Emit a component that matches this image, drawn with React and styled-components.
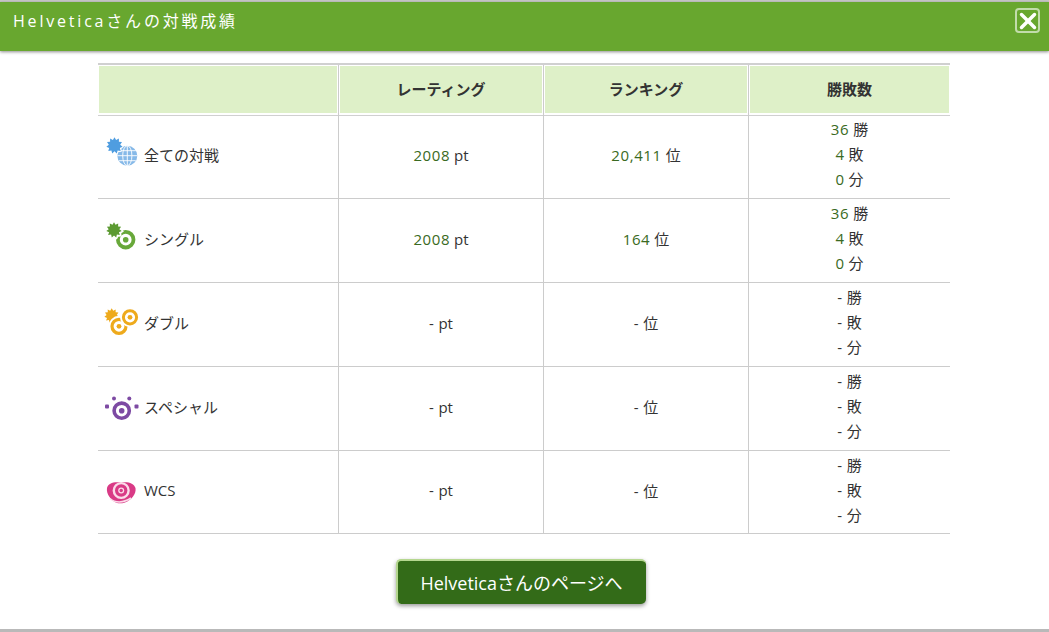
import React from 'react';
import styled, { createGlobalStyle } from 'styled-components';
import { X } from 'lucide-react';

const GlobalStyle = createGlobalStyle`
  html, body {
    margin: 0;
    padding: 0;
    background: #fff;
    overflow: hidden;
  }
  body {
    font-family: "Open Sans", "Noto Sans CJK JP", sans-serif;
    color: #333;
  }
`;

const Page = styled.div`
  width: 1049px;
  height: 632px;
  box-sizing: border-box;
  border-top: 2px solid #c8c8c8;
  border-bottom: 3px solid #b9b9b9;
  display: flex;
  flex-direction: column;
`;

const TitleBar = styled.header`
  height: 49px;
  flex: none;
  background: #68a72f;
  box-shadow: 0 1px 3px rgba(0, 0, 0, 0.45);
  display: flex;
  justify-content: space-between;
  align-items: flex-start;
  padding: 0 9px 0 13px;
`;

const Title = styled.h1`
  margin: 8px 0 0;
  font-size: 16px;
  line-height: 22px;
  font-weight: 400;
  letter-spacing: 2.8px;
  color: #fff;
`;

const CloseButton = styled.button`
  width: 25px;
  height: 25px;
  margin-top: 6px;
  padding: 0;
  box-sizing: border-box;
  border: 2px solid rgba(255, 255, 255, 0.6);
  border-radius: 4px;
  background: transparent;
  color: #fff;
  display: flex;
  align-items: center;
  justify-content: center;
`;

const Table = styled.table`
  width: 852px;
  margin: 14px 0 0 98px;
  table-layout: fixed;
  border-collapse: separate;
  border-spacing: 0;
  font-size: 15px;
`;

const HeadRow = styled.tr`
  box-shadow: 0 -2px 0 0 #d0d0d0, 0 1px 0 0 #d0d0d0;
`;

const HeadCell = styled.th`
  height: 50px;
  padding: 0 0 4px;
  box-sizing: border-box;
  background: #def0c8;
  box-shadow: inset 0 1px 0 #fff, inset 1px 0 0 #fff, inset -1px 0 0 #fff, inset 0 -2px 0 #fff;
  border-left: ${(p) => (p.$first ? 'none' : '1px solid #ccc')};
  font-size: 15px;
  font-weight: 700;
  color: #333;
  text-align: center;
`;

const Row = styled.tr`
  height: 84px;

  &:last-child {
    height: 83px;
  }
`;

const Cell = styled.td`
  padding: 0 0 4px;
  box-sizing: border-box;
  text-align: center;
  border-bottom: 1px solid #ccc;
  border-left: ${(p) => (p.$first ? 'none' : '1px solid #ccc')};
`;

const Label = styled.div`
  display: flex;
  align-items: center;
  gap: 5px;
  padding-left: 7px;
  text-align: left;
`;

const IconBox = styled.span`
  width: 34px;
  height: 32px;
  flex: none;
  margin-top: -1px;
`;

const Num = styled.span`
  letter-spacing: 0.6px;
  color: ${(p) => (p.$empty ? '#333' : '#3a6a22')};
`;

const Tally = styled.div`
  line-height: 25px;
`;

const Footer = styled.div`
  display: flex;
  justify-content: center;
  margin-top: 25px;
  padding-right: 8px;
`;

const PageButton = styled.button`
  width: 250px;
  height: 45px;
  padding: 0 0 2px;
  box-sizing: border-box;
  border: none;
  border-top: 2px solid #b5d78f;
  border-left: 2px solid #b5d78f;
  border-radius: 5px;
  background: #336b18;
  box-shadow: 0 2px 4px rgba(0, 0, 0, 0.4);
  color: #fff;
  font-family: inherit;
  font-size: 18px;
`;

// burst shape shared by the first three icons
const burst = (cx, cy, outer, inner, n = 11) =>
  Array.from({ length: n * 2 }, (_, i) => {
    const r = i % 2 ? inner : outer;
    const a = (Math.PI * i) / n;
    return `${(cx + r * Math.sin(a)).toFixed(1)},${(cy - r * Math.cos(a)).toFixed(1)}`;
  }).join(' ');

const IconSvg = styled.svg.attrs({ width: 34, height: 32, viewBox: '0 0 34 32' })`
  display: block;
  overflow: visible;
`;

const GlobeIcon = () => (
  <IconSvg>
    <circle cx="22.3" cy="17.7" r="10" fill="#86b9e8" />
    <g stroke="#fff" strokeWidth="0.9" fill="none">
      <ellipse cx="22.3" cy="17.7" rx="4.6" ry="10" />
      <path d="M22.3 7.7v20M12.3 17.7h20M13.8 12.7h17M13.8 22.7h17" />
    </g>
    <polygon fill="#fff" points={burst(9.5, 7.5, 9.4, 7.6)} />
    <polygon fill="#4f9de0" points={burst(9.5, 7.5, 8.2, 5.8)} />
  </IconSvg>
);

const SingleIcon = () => (
  <IconSvg>
    <circle cx="20.7" cy="17.7" r="7.8" fill="none" stroke="#68a83a" strokeWidth="3.8" />
    <circle cx="20.7" cy="17.7" r="2.8" fill="#68a83a" />
    <polygon fill="#fff" points={burst(9, 8, 10, 8)} />
    <polygon fill="#5c9a32" points={burst(9, 8, 7.8, 5.4)} />
  </IconSvg>
);

const DoubleIcon = () => (
  <IconSvg>
    <polygon fill="#eeaa1c" points={burst(6.7, 9.7, 7.4, 5.2)} />
    <circle cx="14" cy="20.3" r="10.5" fill="#fff" />
    <circle cx="14" cy="20.3" r="7" fill="none" stroke="#eeaa1c" strokeWidth="3.2" />
    <circle cx="14" cy="20.3" r="2.4" fill="#eeaa1c" />
    <circle cx="25" cy="11.3" r="10" fill="#fff" />
    <circle cx="25" cy="11.3" r="6.6" fill="none" stroke="#eeaa1c" strokeWidth="3" />
    <circle cx="25" cy="11.3" r="2.4" fill="#eeaa1c" />
  </IconSvg>
);

const SpecialIcon = () => (
  <IconSvg>
    <circle cx="16.7" cy="20.7" r="7.6" fill="none" stroke="#7d4aa3" strokeWidth="3.6" />
    <circle cx="16.7" cy="20.7" r="2.8" fill="#7d4aa3" />
    <g fill="#7d4aa3">
      <rect x="0" y="14.5" width="4" height="4" rx="1" />
      <rect x="29.5" y="14.5" width="4" height="4" rx="1" />
      <circle cx="9" cy="8.5" r="2" />
      <circle cx="24.3" cy="8.5" r="2" />
    </g>
  </IconSvg>
);

const WcsIcon = () => (
  <IconSvg>
    <path fill="#d93a86" d="M2 14c1-5 7-6.500 14-5.500 7-1 13 .5 14.500 5.500 1 6-4 12-10.500 14.500-3 1-6 1-8 .5C6 26.500 1 20 2 14z" />
    <circle cx="16.200" cy="16.500" r="7.400" fill="none" stroke="#fbdbe9" strokeWidth="2.400" />
    <circle cx="16.200" cy="16.500" r="3" fill="#fbdbe9" />
    <circle cx="16.200" cy="16.500" r="1.700" fill="#d93a86" />
    <path d="M5 24.500c5 4.500 13 4.800 21-.5" fill="none" stroke="#fbdbe9" strokeWidth="1.600" />
  </IconSvg>
);

const rows = [
  { name: '全ての対戦', Icon: GlobeIcon, rate: '2008', rank: '20,411', win: '36', lose: '4', draw: '0' },
  { name: 'シングル', Icon: SingleIcon, rate: '2008', rank: '164', win: '36', lose: '4', draw: '0' },
  { name: 'ダブル', Icon: DoubleIcon, rate: '-', rank: '-', win: '-', lose: '-', draw: '-' },
  { name: 'スペシャル', Icon: SpecialIcon, rate: '-', rank: '-', win: '-', lose: '-', draw: '-' },
  { name: 'WCS', Icon: WcsIcon, rate: '-', rank: '-', win: '-', lose: '-', draw: '-' },
];

const Value = ({ value, unit }) => (
  <>
    <Num $empty={value === '-'}>{value}</Num> {unit}
  </>
);

export default function App() {
  return (
    <>
      <GlobalStyle />
      <Page>
        <TitleBar>
          <Title>Helveticaさんの対戦成績</Title>
          <CloseButton aria-label="閉じる">
            <X size={26} strokeWidth={3.2} style={{ flex: 'none' }} />
          </CloseButton>
        </TitleBar>
        <Table>
          <colgroup>
            <col style={{ width: 240 }} />
            <col style={{ width: 205 }} />
            <col style={{ width: 205 }} />
            <col style={{ width: 202 }} />
          </colgroup>
          <thead>
            <HeadRow>
              <HeadCell $first />
              <HeadCell>レーティング</HeadCell>
              <HeadCell>ランキング</HeadCell>
              <HeadCell>勝敗数</HeadCell>
            </HeadRow>
          </thead>
          <tbody>
            {rows.map((r) => (
              <Row key={r.name}>
                <Cell $first>
                  <Label>
                    <IconBox><r.Icon /></IconBox>
                    {r.name}
                  </Label>
                </Cell>
                <Cell><Value value={r.rate} unit="pt" /></Cell>
                <Cell><Value value={r.rank} unit="位" /></Cell>
                <Cell>
                  <Tally><Value value={r.win} unit="勝" /></Tally>
                  <Tally><Value value={r.lose} unit="敗" /></Tally>
                  <Tally><Value value={r.draw} unit="分" /></Tally>
                </Cell>
              </Row>
            ))}
          </tbody>
        </Table>
        <Footer>
          <PageButton>Helveticaさんのページへ</PageButton>
        </Footer>
      </Page>
    </>
  );
}
